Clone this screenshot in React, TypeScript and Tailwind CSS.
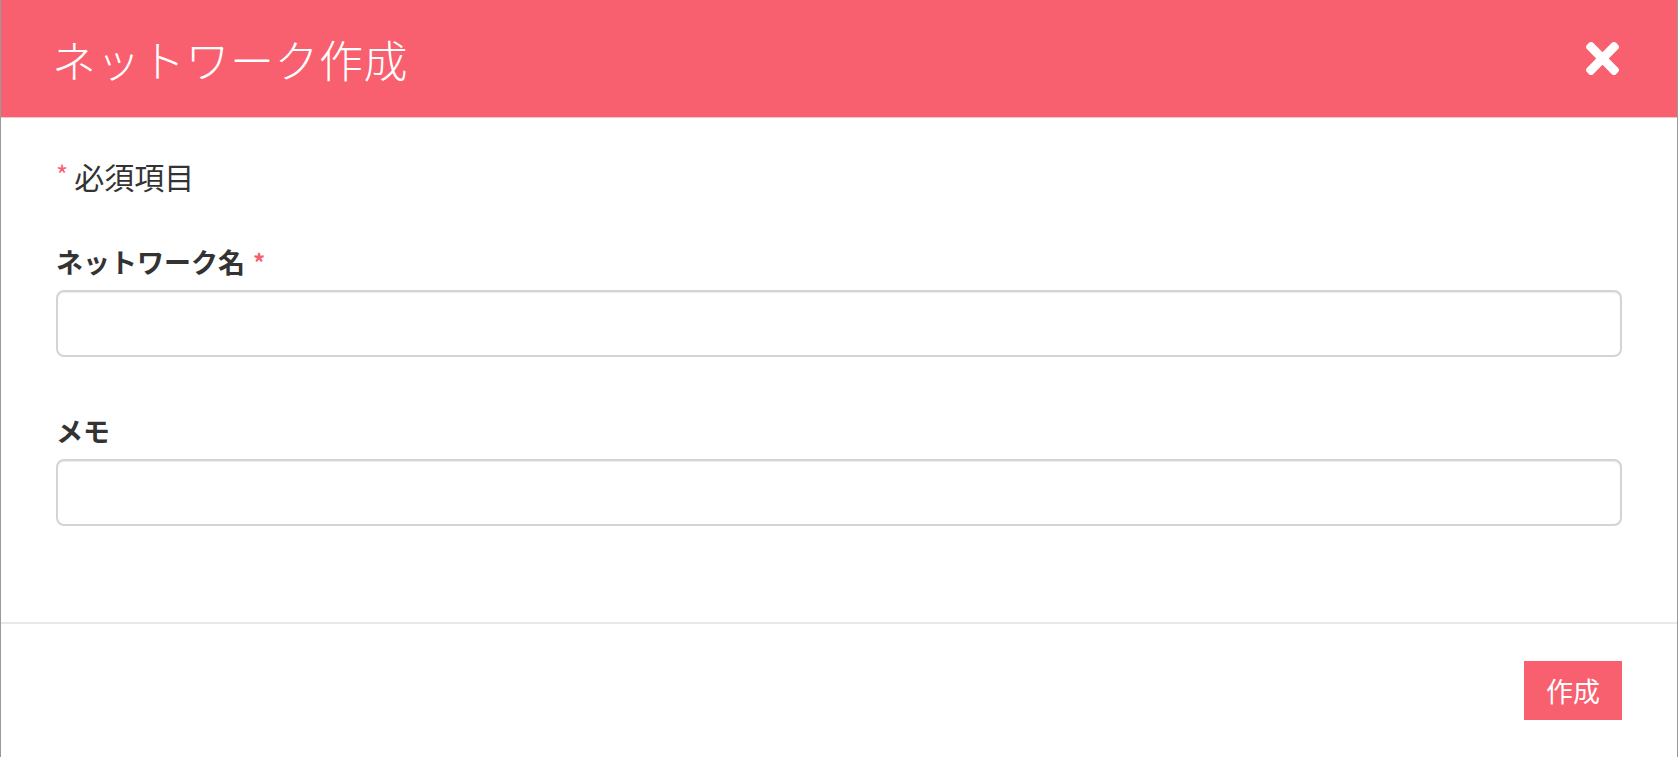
import React, { useState } from "react";

const jp = { fontFamily: '"Noto Sans CJK JP", "Noto Sans", sans-serif' };

const CloseIcon: React.FC = () => (
  <svg width="33" height="33" viewBox="0 80 352 352" fill="currentColor" aria-hidden="true">
    <path d="M242.72 256l100.07-100.07c12.28-12.28 12.28-32.19 0-44.480l-22.24-22.24c-12.28-12.28-32.19-12.28-44.48 0L176 189.28 75.93 89.21c-12.28-12.28-32.19-12.28-44.48 0L9.21 111.45c-12.28 12.28-12.28 32.19 0 44.48L109.28 256 9.21 356.07c-12.28 12.28-12.28 32.19 0 44.48l22.24 22.24c12.28 12.28 32.2 12.28 44.48 0L176 322.72l100.070 100.07c12.28 12.28 32.2 12.28 44.48 0l22.24-22.24c12.28-12.28 12.28-32.19 0-44.48L242.72 256z" />
  </svg>
);

export default function App() {
  const [name, setName] = useState("");
  const [memo, setMemo] = useState("");

  return (
    <div
      className="w-full h-[757px] bg-white border-x border-[#9a9a9a] flex flex-col overflow-hidden text-[#333]"
      style={jp}
    >
      {/* Header */}
      <div className="h-[118px] shrink-0 bg-[#f9606f] border-b border-[#f3c4c9] flex items-center justify-between pl-[51px] pr-[58px]">
        <h4 className="text-[44px] tracking-[0.5px] font-light text-white leading-none">ネットワーク作成</h4>
        <button className="text-white" aria-label="close">
          <CloseIcon />
        </button>
      </div>

      {/* Body */}
      <div className="flex-1 px-[55px] pt-[38px]">
        <p className="text-[30px] leading-[40px] flex items-start">
          <span className="text-[#f9606f] text-[26px] leading-[36px] mr-[6px]">*</span>
          <span>必須項目</span>
        </p>

        <label className="block mt-[47px] text-[27px] leading-[38px] font-bold">
          ネットワーク名
          <span className="text-[#f9606f] text-[24px] ml-[8px] align-top">*</span>
        </label>
        <input
          value={name}
          onChange={(e) => setName(e.target.value)}
          className="mt-[9px] block w-full h-[67px] px-[18px] text-[26px] border-2 border-[#d4d4d4] rounded-[8px] shadow-[inset_0_1px_1px_rgba(0,0,0,0.075)] outline-none"
        />

        <label className="block mt-[55px] text-[27px] leading-[38px] font-bold">メモ</label>
        <input
          value={memo}
          onChange={(e) => setMemo(e.target.value)}
          className="mt-[9px] block w-full h-[67px] px-[18px] text-[26px] border-2 border-[#d4d4d4] rounded-[8px] shadow-[inset_0_1px_1px_rgba(0,0,0,0.075)] outline-none"
        />
      </div>

      {/* Footer */}
      <div className="h-[135px] shrink-0 border-t-2 border-[#e8e8e8] flex justify-end items-start pt-[37px] pr-[55px]">
        <button className="w-[98px] h-[59px] bg-[#f9606f] text-white text-[27px] leading-none">
          作成
        </button>
      </div>
    </div>
  );
}
